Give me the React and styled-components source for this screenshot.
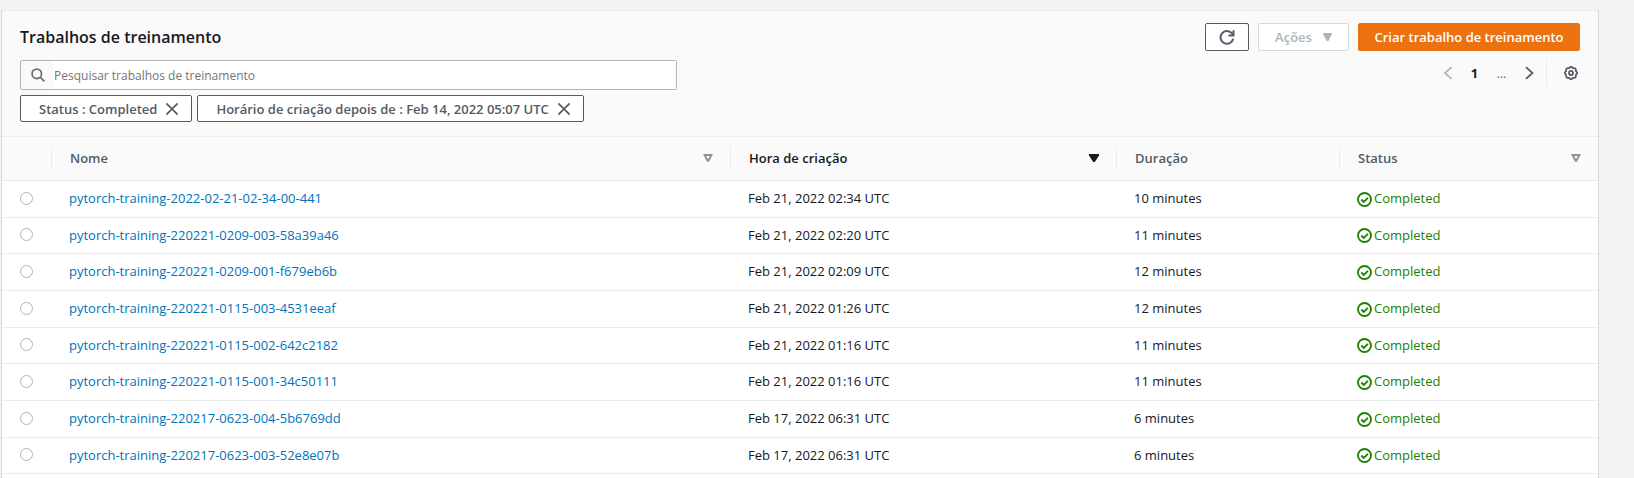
import React from "react";
import styled, { createGlobalStyle } from "styled-components";

const GlobalStyle = createGlobalStyle`
  * { box-sizing: border-box; }
  body {
    margin: 0;
    background: #f2f3f3;
    color: #16191f;
    font: 13px/20px "Open Sans", "Noto Sans", sans-serif;
  }
  button, input { font: inherit; }
`;

const Page = styled.main`
  display: flex;
  min-height: 100vh;
  padding: 10px 35px 0 1px;
`;

const Panel = styled.section`
  flex: 1;
  min-width: 0;
  background: #fff;
  border: solid #d5dbdb;
  border-width: 1px 1px 0;
  border-top-color: #eaeded;
`;

const PanelHeader = styled.header`
  padding: 12px 18px 14px;
  background: #fafafa;
`;

const TitleRow = styled.div`
  display: flex;
  align-items: center;
  justify-content: space-between;
  height: 28px;
`;

const Title = styled.h2`
  margin: 0;
  font-size: 16px;
  font-weight: 600;
  line-height: 20px;
`;

const Actions = styled.div`
  display: flex;
  gap: 9px;
`;

const tones = {
  normal: "color: #545b64; background: #fff; border-color: #545b64;",
  disabled: "color: #aab7b8; background: #fff; border-color: #d5dbdb;",
  primary: "color: #fff; background: #ec7211; border-color: #ec7211;",
};

const Button = styled.button`
  display: inline-flex;
  align-items: center;
  justify-content: center;
  gap: 11px;
  height: 28px;
  min-width: ${(p) => p.$width}px;
  padding: 0 12px;
  border: 1px solid;
  border-radius: 2px;
  font-weight: 600;
  white-space: nowrap;
  ${(p) => tones[p.$tone || "normal"]}
`;

const Tools = styled.div`
  display: flex;
  justify-content: space-between;
  align-items: flex-start;
  margin-top: 9px;
`;

const SearchBox = styled.label`
  display: flex;
  align-items: center;
  flex: 0 1 657px;
  height: 30px;
  border: 1px solid #aab7b8;
  border-radius: 2px;
  color: #687078;
`;

const SearchIcon = styled.span`
  display: flex;
  flex: none;
  width: 32px;
  padding-left: 10px;
`;

const SearchInput = styled.input`
  flex: 1;
  min-width: 0;
  height: 28px;
  padding: 0 1px;
  border: 0;
  outline: 0;
  background: #fff;
  font-size: 12px;
  &::placeholder { color: #757575; opacity: 1; }
`;

const Pager = styled.nav`
  display: flex;
  align-items: center;
  height: 27px;
  margin-right: -4px;
  color: #545b64;
`;

const PagerButton = styled.button`
  display: flex;
  align-items: center;
  justify-content: center;
  width: 27px;
  height: 27px;
  padding: 0 0 2px;
  border: 0;
  background: none;
  color: ${(p) => (p.$current ? "#16191f" : p.disabled ? "#aab7b8" : "#545b64")};
  font-weight: ${(p) => (p.$current ? 700 : 400)};
`;

const Ellipsis = styled.span`
  width: 27px;
  text-align: center;
  font-size: 12px;
`;

const Settings = styled.div`
  display: flex;
  padding-left: 10px;
  margin-left: 4px;
  border-left: 1px solid #eaeded;
`;

const Filters = styled.div`
  display: flex;
  gap: 5px;
  margin-top: 5px;
`;

const Filter = styled.span`
  display: inline-flex;
  align-items: center;
  gap: 8px;
  height: 27px;
  padding: 0 12px 0 18px;
  border: 1px solid #545b64;
  border-radius: 2px;
  background: #fff;
  color: #545b64;
  font-weight: 600;
  white-space: nowrap;
`;

const Dismiss = styled.button`
  display: flex;
  padding: 0;
  border: 0;
  background: none;
  color: #545b64;
`;

const Table = styled.table`
  width: 100%;
  table-layout: fixed;
  border-collapse: separate;
  border-spacing: 0;
`;

const Col = styled.col`
  width: ${(p) => (p.$width ? `${p.$width}px` : "auto")};
`;

const HeadCell = styled.th`
  height: 45px;
  padding: 0 0 2px;
  border: solid #eaeded;
  border-width: 1px 0;
  background: #fafafa;
  color: ${(p) => (p.$sorted ? "#16191f" : "#545b64")};
  font-weight: 600;
  text-align: left;
`;

const HeadLabel = styled.div`
  display: flex;
  align-items: center;
  justify-content: space-between;
  height: 21px;
  padding: 0 17px 0 18px;
  border-right: ${(p) => (p.$last ? "0" : "1px solid #eaeded")};
`;

const Row = styled.tr`
  height: 37px;
  &:nth-child(3n + 2) { height: 36px; }
`;

const Cell = styled.td`
  padding: 0 17px 2px;
  border-bottom: 1px solid #eaeded;
  white-space: nowrap;
`;

const SelectCell = styled(Cell)`
  padding: 0 18px 2px;
`;

const Radio = styled.input`
  display: block;
  appearance: none;
  width: 13px;
  height: 13px;
  margin: 0;
  border: 1px solid #aab7b8;
  border-radius: 50%;
  background: #fff;
  &:checked { border: 4px solid #0073bb; }
`;

const JobLink = styled.a`
  color: #0073bb;
  text-decoration: none;
`;

const Status = styled.span`
  display: flex;
  align-items: center;
  gap: 2px;
  color: #1d8102;
  svg { margin-top: 2px; }
`;

const Icon = ({ size = 14, width = 2, children }) => (
  <svg width={size} height={size} viewBox="0 0 16 16" fill="none" stroke="currentColor" strokeWidth={width} aria-hidden="true">
    {children}
  </svg>
);

const SortIcon = ({ filled }) => (
  <svg width="10" height="8" viewBox="0 0 10 8" aria-hidden="true">
    {filled ? (
      <path d="M0 0h10v1.5L5.8 8H4.2L0 1.5z" fill="#16191f" />
    ) : (
      <path d="M1.6 1h6.8L5.4 6.8h-.8z" fill="none" stroke="#879596" strokeWidth="1.9" />
    )}
  </svg>
);

const CloseIcon = () => (
  <Icon size={14} width={1.9}><path d="M1.5 1.5l13 13M14.5 1.5l-13 13" /></Icon>
);

const gearPath = Array.from({ length: 64 }, (_, i) => {
  const a = (i / 64) * Math.PI * 2;
  const r = 6.6 + 0.55 * Math.cos(a * 8);
  return `${i ? "L" : "M"}${(8 + r * Math.cos(a)).toFixed(2)} ${(8 + r * Math.sin(a)).toFixed(2)}`;
}).join("") + "Z";

const filters = ["Status : Completed", "Horário de criação depois de : Feb 14, 2022 05:07 UTC"];

const columns = [
  { label: "Nome", sort: true },
  { label: "Hora de criação", sort: true, sorted: true },
  { label: "Duração" },
  { label: "Status", sort: true },
];

const jobs = [
  ["pytorch-training-2022-02-21-02-34-00-441", "Feb 21, 2022 02:34 UTC", "10 minutes"],
  ["pytorch-training-220221-0209-003-58a39a46", "Feb 21, 2022 02:20 UTC", "11 minutes"],
  ["pytorch-training-220221-0209-001-f679eb6b", "Feb 21, 2022 02:09 UTC", "12 minutes"],
  ["pytorch-training-220221-0115-003-4531eeaf", "Feb 21, 2022 01:26 UTC", "12 minutes"],
  ["pytorch-training-220221-0115-002-642c2182", "Feb 21, 2022 01:16 UTC", "11 minutes"],
  ["pytorch-training-220221-0115-001-34c50111", "Feb 21, 2022 01:16 UTC", "11 minutes"],
  ["pytorch-training-220217-0623-004-5b6769dd", "Feb 17, 2022 06:31 UTC", "6 minutes"],
  ["pytorch-training-220217-0623-003-52e8e07b", "Feb 17, 2022 06:31 UTC", "6 minutes"],
];

export default function App() {
  return (
    <>
      <GlobalStyle />
      <Page>
        <Panel>
          <PanelHeader>
            <TitleRow>
              <Title>Trabalhos de treinamento</Title>
              <Actions>
                <Button $width={44} aria-label="Atualizar">
                  <Icon size={16}>
                    <path d="M14.2 9.8A6.4 6.4 0 1 1 12.8 4.2L14.4 6" />
                    <path d="M14.5 1.2v5.2H9.4" />
                  </Icon>
                </Button>
                <Button $width={91} $tone="disabled" disabled>
                  Ações
                  <svg width="9" height="8" viewBox="0 0 9 8" aria-hidden="true">
                    <path d="M0 0h9v1L5.4 8H3.6L0 1z" fill="currentColor" />
                  </svg>
                </Button>
                <Button $width={222} $tone="primary">Criar trabalho de treinamento</Button>
              </Actions>
            </TitleRow>
            <Tools>
              <SearchBox>
                <SearchIcon>
                  <Icon><circle cx="6.6" cy="6.6" r="5.4" /><path d="M10.5 10.5l4.8 4.8" /></Icon>
                </SearchIcon>
                <SearchInput type="text" aria-label="Pesquisar" placeholder="Pesquisar trabalhos de treinamento" />
              </SearchBox>
              <Pager aria-label="Paginação">
                <PagerButton disabled aria-label="Página anterior">
                  <Icon><path d="M12 1.2L4.5 8l7.5 6.8" /></Icon>
                </PagerButton>
                <PagerButton $current aria-current="page">1</PagerButton>
                <Ellipsis>...</Ellipsis>
                <PagerButton aria-label="Próxima página">
                  <Icon><path d="M4.5 1.2L12 8l-7.5 6.8" /></Icon>
                </PagerButton>
                <Settings>
                  <PagerButton aria-label="Preferências">
                    <Icon><path d={gearPath} /><circle cx="8" cy="8" r="2.3" /></Icon>
                  </PagerButton>
                </Settings>
              </Pager>
            </Tools>
            <Filters>
              {filters.map((f) => (
                <Filter key={f}>
                  {f}
                  <Dismiss aria-label={`Remover filtro ${f}`}><CloseIcon /></Dismiss>
                </Filter>
              ))}
            </Filters>
          </PanelHeader>
          <Table>
            <colgroup>
              <Col $width={50} />
              <Col />
              <Col $width={386} />
              <Col $width={223} />
              <Col $width={258} />
            </colgroup>
            <thead>
              <tr>
                <HeadCell aria-label="Seleção"><HeadLabel /></HeadCell>
                {columns.map((c, i) => (
                  <HeadCell key={c.label} $sorted={c.sorted} scope="col">
                    <HeadLabel $last={i === columns.length - 1}>
                      {c.label}
                      {c.sort && <SortIcon filled={c.sorted} />}
                    </HeadLabel>
                  </HeadCell>
                ))}
              </tr>
            </thead>
            <tbody>
              {jobs.map(([name, created, duration]) => (
                <Row key={name}>
                  <SelectCell><Radio type="radio" name="job" aria-label={name} /></SelectCell>
                  <Cell><JobLink href="#">{name}</JobLink></Cell>
                  <Cell>{created}</Cell>
                  <Cell>{duration}</Cell>
                  <Cell>
                    <Status>
                      <Icon size={15}><circle cx="8" cy="8" r="6.9" /><path d="M4.6 8l2.6 2.6 4.4-4.4" /></Icon>
                      Completed
                    </Status>
                  </Cell>
                </Row>
              ))}
            </tbody>
          </Table>
        </Panel>
      </Page>
    </>
  );
}
